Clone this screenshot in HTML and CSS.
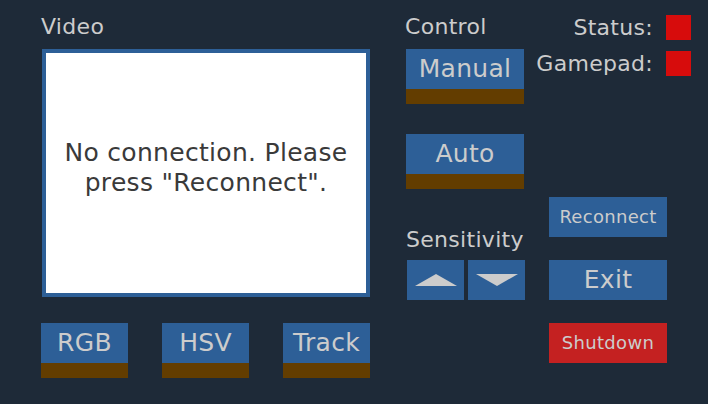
FILE: index.html
```html
<!DOCTYPE html>
<html>
<head>
<meta charset="utf-8">
<link rel="stylesheet" href="styles.css">
</head>
<body>
<div class="app">
  <div class="col-left">
    <div class="label">Video</div>
    <div class="video">
      <div class="video-inner">No connection. Please<br>press "Reconnect".</div>
    </div>
    <div class="mode-row">
      <div class="tbtn"><div class="tbtn-top">RGB</div><div class="tbtn-bar"></div></div>
      <div class="tbtn"><div class="tbtn-top">HSV</div><div class="tbtn-bar"></div></div>
      <div class="tbtn"><div class="tbtn-top">Track</div><div class="tbtn-bar"></div></div>
    </div>
  </div>
  <div class="col-mid">
    <div class="label">Control</div>
    <div class="tbtn tbtn-wide manual"><div class="tbtn-top">Manual</div><div class="tbtn-bar"></div></div>
    <div class="tbtn tbtn-wide auto"><div class="tbtn-top">Auto</div><div class="tbtn-bar"></div></div>
    <div class="label sens">Sensitivity</div>
    <div class="arrows">
      <div class="abtn"><svg width="42" height="12" viewBox="0 0 42 12"><polygon points="0,12 21,0 42,12" fill="#cccccc"/></svg></div>
      <div class="abtn"><svg width="42" height="12" viewBox="0 0 42 12"><polygon points="0,0 42,0 21,12" fill="#cccccc"/></svg></div>
    </div>
  </div>
  <div class="col-right">
    <div class="status-row"><span class="label-s">Status:</span><span class="led"></span></div>
    <div class="status-row second"><span class="label-s">Gamepad:</span><span class="led"></span></div>
    <div class="btn reconnect">Reconnect</div>
    <div class="btn exit">Exit</div>
    <div class="btn shutdown">Shutdown</div>
  </div>
</div>
</body>
</html>
```

FILE: styles.css
```css
html, body {
  margin: 0;
  padding: 0;
}
body {
  background: #1e2a38;
  width: 708px;
  height: 404px;
  overflow: hidden;
  font-family: "DejaVu Sans", sans-serif;
  color: #cccccc;
  letter-spacing: 0.3px;
}
.app {
  display: flex;
  padding-left: 41px;
}
.label {
  font-size: 22px;
  line-height: 26px;
  height: 26px;
  white-space: nowrap;
}
.col-left {
  width: 329px;
  padding-top: 14px;
  display: flex;
  flex-direction: column;
}
.video {
  margin-top: 9px;
  margin-left: 1px;
  width: 320px;
  height: 240px;
  border: 4px solid #2d5f97;
  background: #ffffff;
}
.video-inner {
  padding-top: 85px;
  text-align: center;
  font-size: 25px;
  line-height: 30px;
  color: #3a3a3a;
}
.mode-row {
  margin-top: 26px;
  display: flex;
  justify-content: space-between;
}
.tbtn {
  width: 87px;
  display: flex;
  flex-direction: column;
}
.tbtn-top {
  height: 40px;
  line-height: 40px;
  background: #2d5f97;
  text-align: center;
  font-size: 25px;
  color: #cccccc;
}
.tbtn-bar {
  height: 15px;
  background: #633d00;
}
.col-mid {
  margin-left: 35px;
  width: 120px;
  padding-top: 14px;
  display: flex;
  flex-direction: column;
}
.tbtn-wide {
  width: 118px;
  margin-left: 1px;
}
.manual {
  margin-top: 9px;
}
.auto {
  margin-top: 30px;
}
.sens {
  margin-top: 38px;
  margin-left: 1px;
}
.arrows {
  margin-top: 7px;
  margin-left: 2px;
  display: flex;
  gap: 4px;
}
.abtn {
  width: 57px;
  height: 40px;
  background: #2d5f97;
  display: flex;
  align-items: center;
  justify-content: center;
}
.abtn svg {
  display: block;
  margin-left: 1px;
}
.col-right {
  margin-left: 11px;
  width: 155px;
  padding-top: 15px;
  display: flex;
  flex-direction: column;
}
.status-row {
  display: flex;
  justify-content: flex-end;
  align-items: center;
  gap: 13px;
  height: 25px;
}
.status-row.second {
  margin-top: 11px;
}
.label-s {
  font-size: 22px;
  line-height: 25px;
  white-space: nowrap;
}
.led {
  width: 25px;
  height: 25px;
  background: #d70c0c;
}
.btn {
  margin-left: 13px;
  width: 118px;
  height: 40px;
  line-height: 40px;
  background: #2d5f97;
  text-align: center;
  color: #cccccc;
  white-space: nowrap;
}
.reconnect {
  margin-top: 121px;
  font-size: 18px;
}
.exit {
  margin-top: 23px;
  font-size: 25px;
}
.shutdown {
  margin-top: 23px;
  font-size: 18px;
  background: #c42121;
}
```
